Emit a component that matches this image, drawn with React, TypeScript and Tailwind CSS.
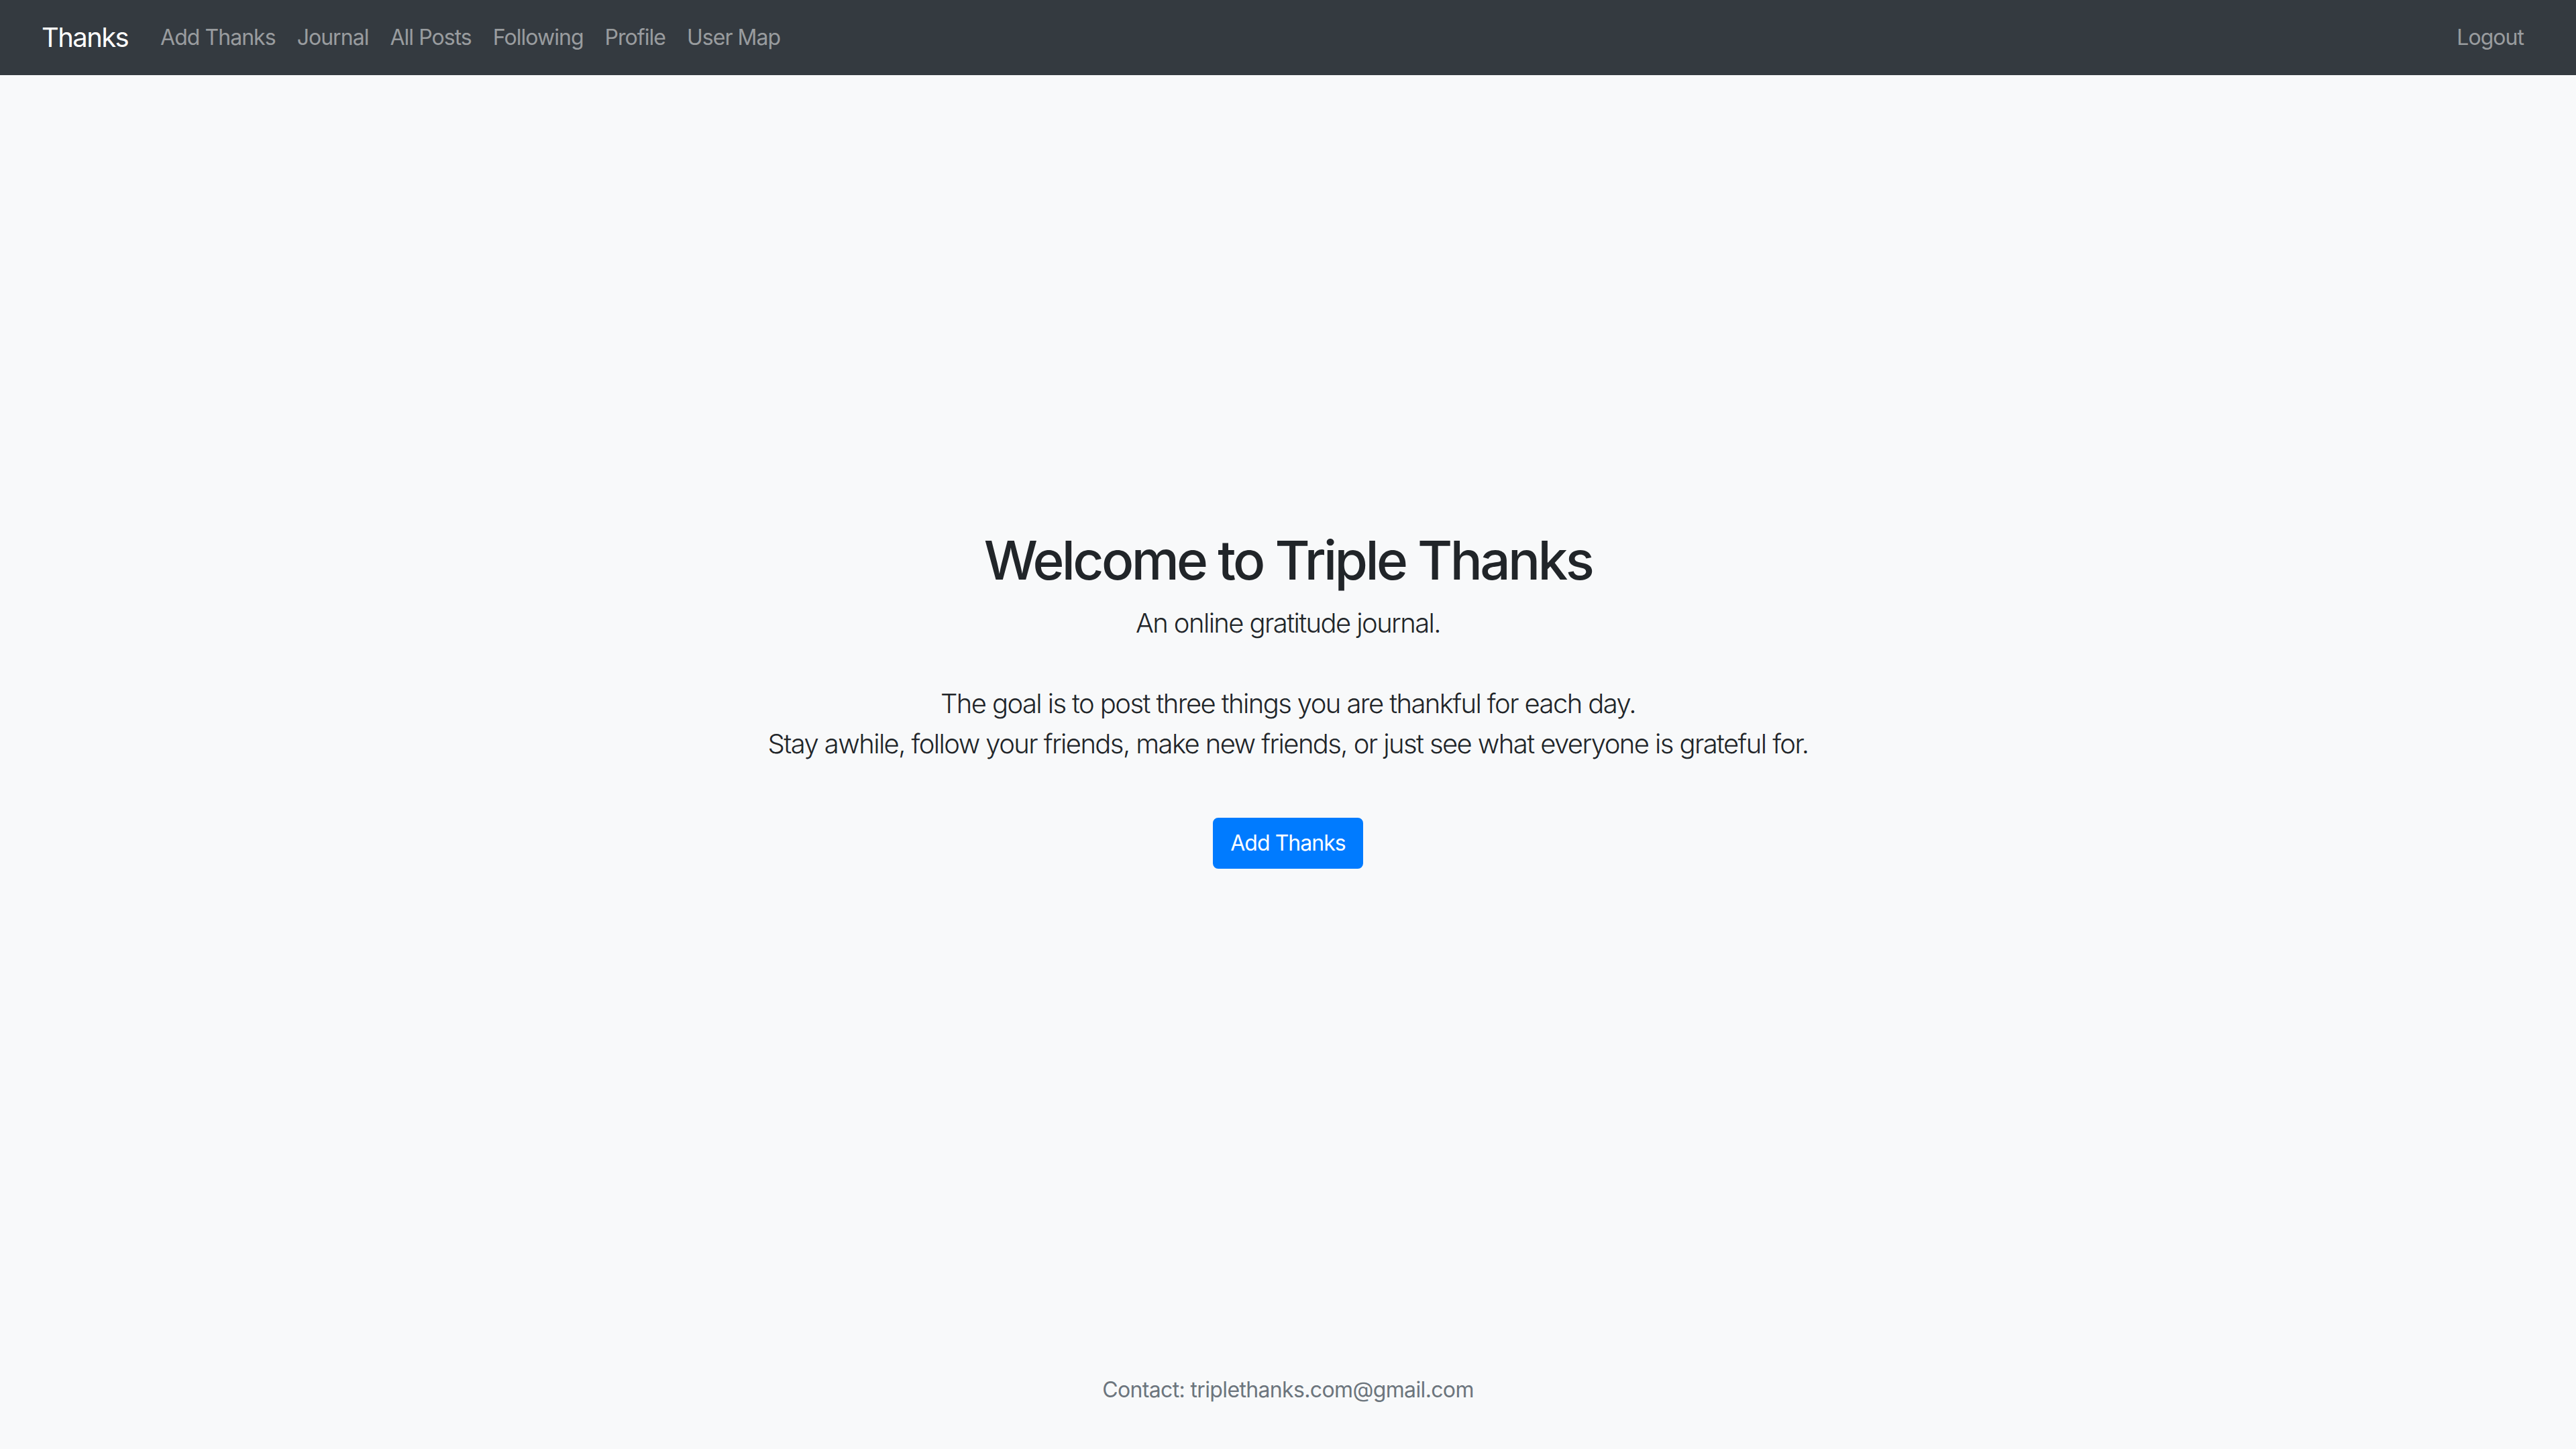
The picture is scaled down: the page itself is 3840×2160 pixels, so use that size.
const navLinks = ['Add Thanks', 'Journal', 'All Posts', 'Following', 'Profile', 'User Map'];

export default function App() {
  return (
    <div className="min-h-screen flex flex-col bg-[#f8f9fa] text-[#212529] font-['Inter','Noto_Sans',sans-serif]">
      {/* Navbar */}
      <nav className="h-[112px] bg-[#343a40] flex items-center px-[62px]">
        <a href="#" className="text-[40px] leading-[60px] tracking-[-0.04em] text-white mr-[32px]">
          Thanks
        </a>
        <ul className="flex items-center">
          {navLinks.map((label) => (
            <li key={label}>
              <a href="#" className="block px-[16px] text-[32px] leading-[48px] tracking-[-0.03em] text-white/50">
                {label}
              </a>
            </li>
          ))}
        </ul>
        <a href="#" className="ml-auto px-[16px] text-[32px] leading-[48px] tracking-[-0.03em] text-white/50">
          Logout
        </a>
      </nav>

      {/* Jumbotron-ish intro */}
      <main className="flex-1 flex flex-col items-center text-center pt-[675px]">
        <h1 className="text-[80px] leading-[96px] font-medium tracking-[-0.045em] mb-[16px]">
          Welcome to Triple Thanks
        </h1>
        <p className="text-[40px] leading-[60px] font-light tracking-[-0.04em] mb-[80px]">
          An online gratitude journal.
          <br />
          <br />
          The goal is to post three things you are thankful for each day.
          <br />
          Stay awhile, follow your friends, make new friends, or just see what everyone is grateful for.
        </p>
        <a
          href="#"
          className="inline-block bg-[#007bff] text-white text-[32px] leading-[48px] tracking-[-0.03em] px-[24px] py-[12px] border-2 border-[#007bff] rounded-[8px]"
        >
          Add Thanks
        </a>
      </main>

      <footer className="text-center pb-[64px]">
        <span className="text-[32px] leading-[48px] tracking-[-0.02em] text-[#6c757d]">
          Contact: triplethanks.com@gmail.com
        </span>
      </footer>
    </div>
  );
}
